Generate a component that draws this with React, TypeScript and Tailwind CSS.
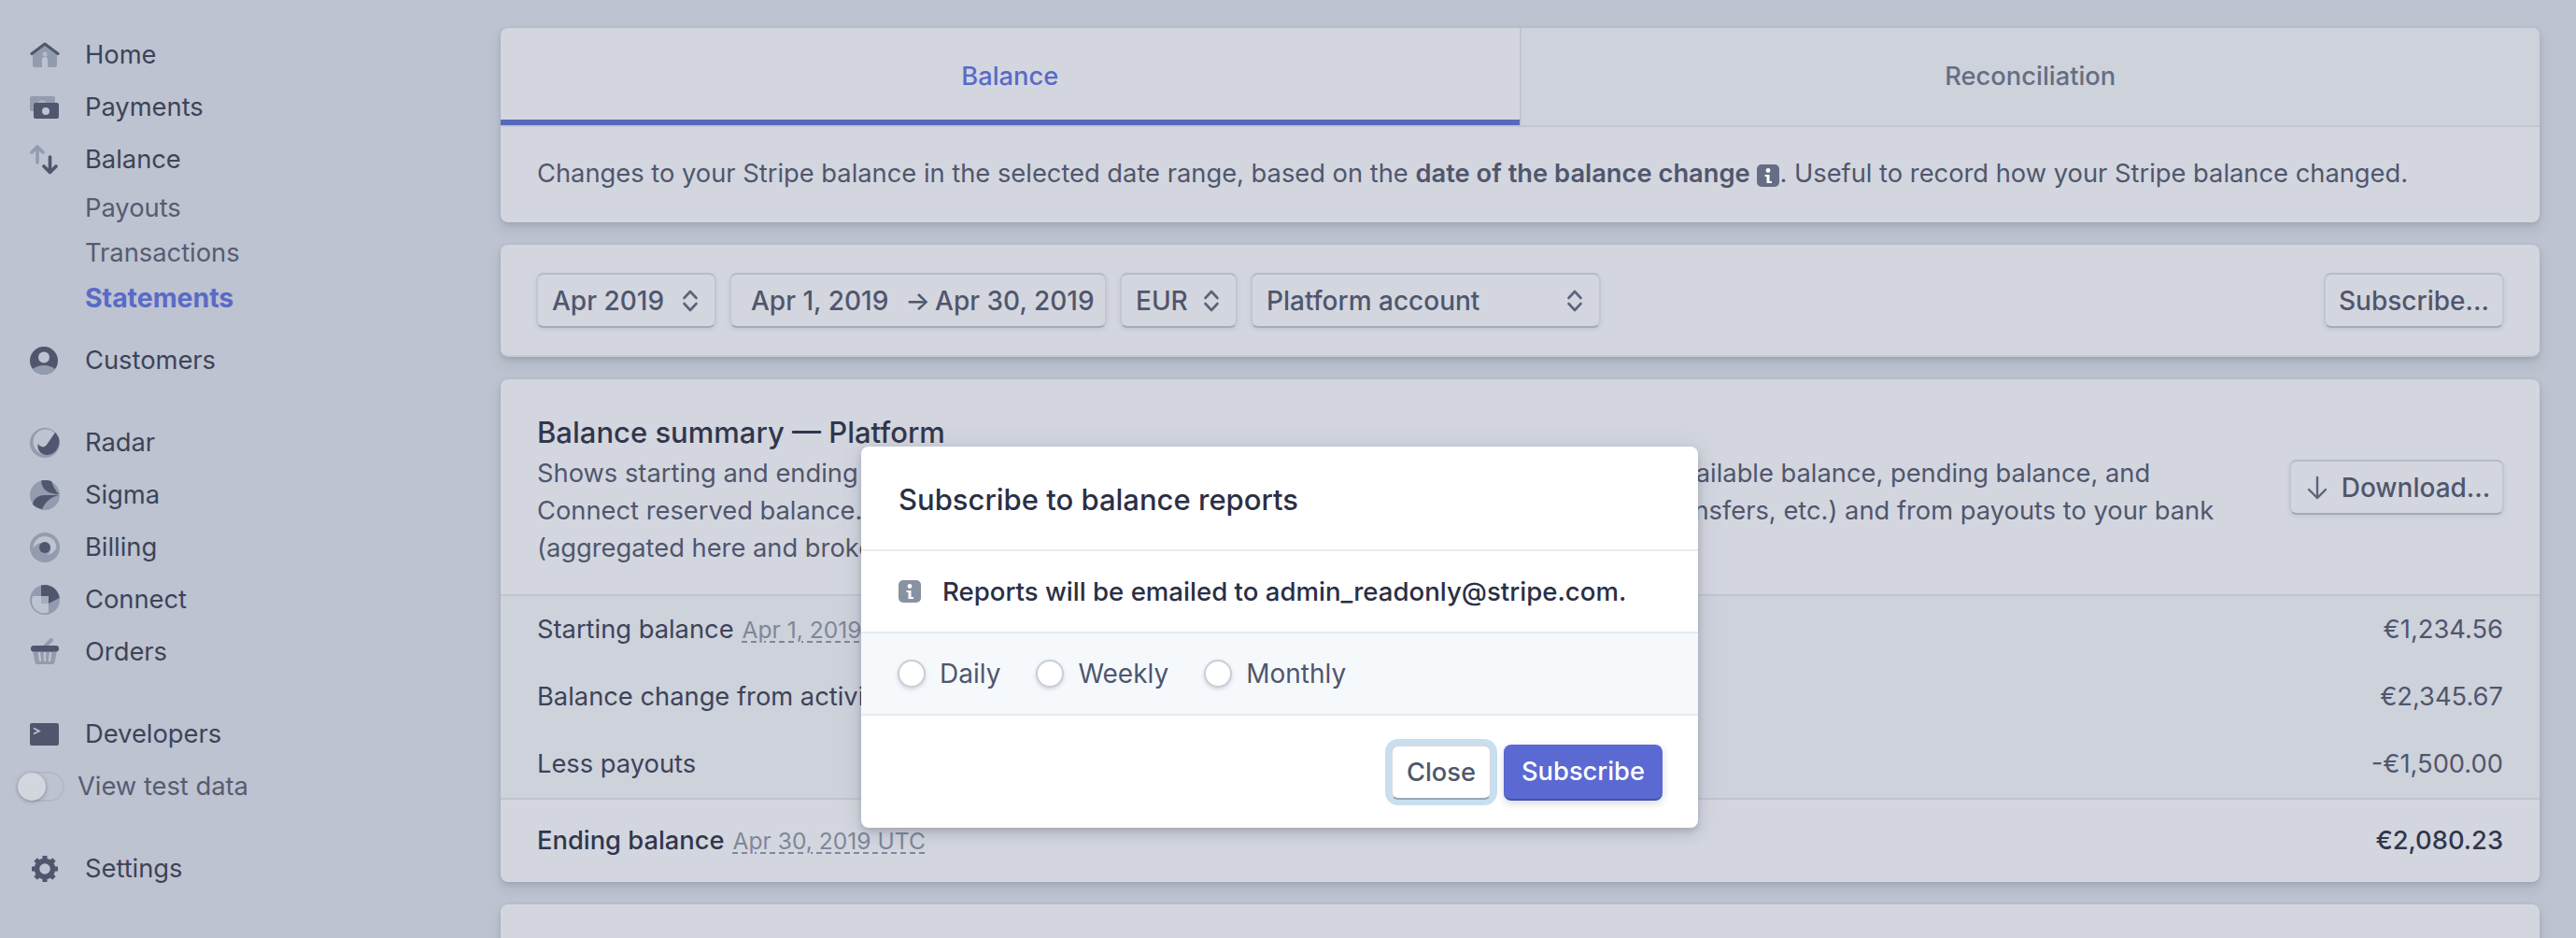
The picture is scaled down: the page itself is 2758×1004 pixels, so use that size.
import React from "react";

const D = "#50566d";
const L = "#929cae";
const B = "#bdc3d0";

const icons: Record<string, React.ReactNode> = {
  home: (
    <>
      <path d="M3 14 16 5l13 9v13a2 2 0 0 1-2 2h-8v-8a3 3 0 0 0-6 0v8H5a2 2 0 0 1-2-2z" fill={L} />
      <circle cx="16" cy="15" r="2.6" fill="#b4bbc8" />
      <path d="M2 14.5 16 4l14 10.5" fill="none" stroke={D} strokeWidth="3" strokeLinecap="round" strokeLinejoin="round" />
    </>
  ),
  payments: (
    <>
      <rect x="0" y="4" width="27" height="16" rx="2" fill={L} />
      <circle cx="13" cy="13" r="5" fill="#aab2c0" />
      <rect x="4" y="11" width="27" height="17" rx="2" fill={D} />
      <circle cx="17" cy="20" r="4" fill={B} />
    </>
  ),
  balance: (
    <>
      <path d="M8 19V2M2 8l6-6 6 6" fill="none" stroke={L} strokeWidth="3.6" strokeLinecap="round" strokeLinejoin="round" />
      <path d="M21.500 13v16M15 23l6.500 6.500L28 23" fill="none" stroke={D} strokeWidth="3.6" strokeLinecap="round" strokeLinejoin="round" />
    </>
  ),
  customers: (
    <>
      <circle cx="15" cy="16" r="15" fill={D} />
      <circle cx="15" cy="12.500" r="6" fill={B} />
      <path d="M3 25a14 8 0 0 1 24 0 15 15 0 0 1-24 0z" fill={L} />
    </>
  ),
  radar: (
    <>
      <circle cx="16" cy="16" r="16" fill={L} />
      <circle cx="17" cy="15" r="13.500" fill={B} />
      <path d="M27 5a14 14 0 0 1-8 24 11 11 0 0 1-9-4 9 9 0 0 1-1-8 5 5 0 0 0 9 1z" fill={D} />
    </>
  ),
  sigma: (
    <>
      <circle cx="16" cy="16" r="16" fill={L} />
      <path d="M12 .5c4-.800 8-.600 11 .5 2 6 5 11 8 14C22 15 13 12 12 .5z" fill={D} />
      <path d="M3 26c1-7 7-10 13-10h15c-9 2-14 7-18 15-4-1-8-3-10-5z" fill={D} />
    </>
  ),
  billing: (
    <>
      <circle cx="16" cy="16" r="16" fill={L} />
      <path d="M3.500 17a12.500 12.500 0 0 1 25-1c-2 5-6 7.500-11 8 7-2 6-13-3-13-6 0-9 3-11 6z" fill={B} />
      <circle cx="16" cy="16" r="6" fill={D} />
    </>
  ),
  connect: (
    <>
      <circle cx="16" cy="16" r="16" fill={L} />
      <path d="M3 12h9v8h8v9.500A13.500 13.500 0 0 1 3 12z" fill={B} />
      <path d="M12 .5A16 16 0 0 1 31.700 14L20 20v-8h-8z" fill={D} />
      <rect x="12" y="12" width="8" height="8" fill="#a4adbb" />
    </>
  ),
  orders: (
    <>
      <path d="M3 14h26l-2.500 13a2.500 2.500 0 0 1-2.500 2H8a2.500 2.500 0 0 1-2.500-2z" fill={L} />
      <path d="M10 17l1 8M16 17v8M22 17l-1 8" stroke={B} strokeWidth="2.400" strokeLinecap="round" />
      <path d="M15 11l8-8" stroke={L} strokeWidth="4" strokeLinecap="round" />
      <rect x="1" y="9" width="30" height="6.500" rx="3" fill={D} />
    </>
  ),
  developers: (
    <>
      <rect x="0" y="4" width="31" height="24" rx="2" fill={D} />
      <path d="M4 9.500l6 3-6 3" fill="none" stroke={B} strokeWidth="1.700" />
    </>
  ),
  settings: (
    <>
      <circle cx="16" cy="16" r="8.500" fill="none" stroke={D} strokeWidth="5.500" />
      {[0, 45, 90, 135, 180, 225, 270, 315].map((a) => (
        <rect key={a} x="13.500" y="2" width="5" height="6" fill={D} transform={`rotate(${a} 16 16)`} />
      ))}
    </>
  ),
};

function Icon({ name }: { name: string }) {
  return (
    <svg width="32" height="32" viewBox="0 0 32 32" className="shrink-0">
      {icons[name]}
    </svg>
  );
}

function NavItem({ icon, label }: { icon: string; label: string }) {
  return (
    <div className="flex h-14 items-center gap-[27px] pl-8 text-[#3d435a]">
      <Icon name={icon} />
      <span>{label}</span>
    </div>
  );
}

function SubItem({ label, active }: { label: string; active?: boolean }) {
  return (
    <div className={`flex h-12 items-center pl-[91px] ${active ? "text-[28.4px] font-bold text-[#5a6ac6]" : "text-[#565c72]"}`}>{label}</div>
  );
}

function Chevrons() {
  return (
    <svg width="18" height="24" viewBox="0 0 18 24" fill="none" stroke="#5d6379" strokeWidth="2.600" strokeLinecap="round" strokeLinejoin="round" className="shrink-0">
      <path d="M2.500 9 9 2l6.500 7M2.500 15 9 22l6.500-7" />
    </svg>
  );
}

const ctl =
  "flex h-[59px] items-center rounded-lg border-2 border-[#c2c6d1] border-t-[#b7bbc7] border-b-[#a4aab8] shadow-[0_2px_4px_rgba(60,66,87,0.1)] text-[28px] text-[#50566d] font-medium";

function Info({ dark }: { dark?: boolean }) {
  return (
    <span className={`inline-flex h-6 w-6 shrink-0 items-center justify-center rounded-[5px] ${dark ? "align-[-2px] bg-[#656e84]" : "bg-[#8792a2]"}`}>
      <svg width="10" height="18" viewBox="0 0 10 18" fill="#fff">
        <circle cx="5" cy="3.500" r="2.400" />
        <path d="M1.500 8h5v7H9v2H3.500V10h-2z" />
      </svg>
    </span>
  );
}

function DateLabel({ children }: { children: React.ReactNode }) {
  return (
    <span className="ml-[9px] text-[24.6px] font-normal text-[#7f8799] underline decoration-dashed decoration-2 underline-offset-[3px]">{children}</span>
  );
}

function Row({ label, date, amount }: { label: string; date?: string; amount: string }) {
  return (
    <div className="flex h-[72px] items-center justify-between px-[39px] text-[#3d435a]">
      <span>
        {label}
        {date && <DateLabel>{date}</DateLabel>}
      </span>
      <span className="text-[#50566d]">{amount}</span>
    </div>
  );
}

function Radio({ label, mr }: { label: string; mr: string }) {
  return (
    <div className={`flex items-center gap-[15px] ${mr}`}>
      <span className="h-[30px] w-[30px] rounded-full border-2 border-[#c9ced8] bg-white shadow-[0_2px_4px_rgba(60,66,87,0.2)]" />
      <span className="text-[28px] text-[#50566d]">{label}</span>
    </div>
  );
}

const card = "shrink-0 rounded-lg bg-[#d3d6df] shadow-[0_2px_5px_rgba(60,66,87,0.16),0_7px_14px_rgba(60,66,87,0.12)]";

export default function App() {
  return (
    <div className="relative flex h-[1004px] w-[2758px] overflow-hidden bg-[#bdc3d0] text-[27.3px] leading-10 [font-family:Inter,sans-serif]">
      <aside className="w-[536px] shrink-0 pt-[31px]">
        <NavItem icon="home" label="Home" />
        <NavItem icon="payments" label="Payments" />
        <NavItem icon="balance" label="Balance" />
        <SubItem label="Payouts" />
        <SubItem label="Transactions" />
        <SubItem label="Statements" active />
        <div className="mt-[15px]">
          <NavItem icon="customers" label="Customers" />
        </div>
        <div className="mt-8">
          <NavItem icon="radar" label="Radar" />
          <NavItem icon="sigma" label="Sigma" />
          <NavItem icon="billing" label="Billing" />
          <NavItem icon="connect" label="Connect" />
          <NavItem icon="orders" label="Orders" />
        </div>
        <div className="mt-8">
          <NavItem icon="developers" label="Developers" />
        </div>
        <div className="flex h-14 items-center gap-[14px] pl-[19px] text-[#565c72]">
          <span className="flex h-8 w-[50px] items-center rounded-full border-2 border-[#b2b9c6]">
            <span className="-ml-0.5 h-[30px] w-[30px] rounded-full bg-[#d3d6df] shadow-[0_1px_4px_rgba(60,66,87,0.45)]" />
          </span>
          <span>View test data</span>
        </div>
        <div className="mt-8">
          <NavItem icon="settings" label="Settings" />
        </div>
      </aside>

      <main className="flex w-[2183px] shrink-0 flex-col gap-6 pt-[30px]">
        <section className={card}>
          <div className="flex h-[106px] border-b-2 border-[#c0c5d1]">
            <div className="flex flex-1 items-center justify-center border-b-[6px] border-[#5868bd] pt-1.5 font-medium text-[#5a6ac6]">Balance</div>
            <div className="flex flex-1 items-center justify-center rounded-tr-lg border-l-2 border-[#c0c5d1] bg-[#ced2db] font-medium text-[#666d83]">Reconciliation</div>
          </div>
          <p className="px-[39px] pb-[32px] pt-[30px] text-[#50566d]">
            Changes to your Stripe balance in the selected date range, based on the <b className="font-semibold">date of the balance change</b> <Info dark />. Useful to record how your Stripe balance changed.
          </p>
        </section>

        <section className={`${card} flex h-[120px] items-start justify-between border-b-2 border-[#c6cad4] px-[38px] pt-[30px]`}>
          <div className="flex gap-[14px]">
            <div className={`${ctl} w-[193px] justify-between pl-[15px] pr-[17px]`}>
              <span>Apr 2019</span>
              <Chevrons />
            </div>
            <div className={`${ctl} w-[404px] pl-[21px]`}>
              <span>Apr 1, 2019</span>
              <span className="ml-[18px] mr-[5px]">→</span>
              <span>Apr 30, 2019</span>
            </div>
            <div className={`${ctl} w-[126px] justify-between pl-[15px] pr-[17px]`}>
              <span>EUR</span>
              <Chevrons />
            </div>
            <div className={`${ctl} w-[375px] justify-between pl-[15px] pr-[17px]`}>
              <span>Platform account</span>
              <Chevrons />
            </div>
          </div>
          <div className={`${ctl} w-[193px] justify-center`}>Subscribe...</div>
        </section>

        <section className={card}>
          <div className="relative h-[232px] border-b-2 border-[#c0c5d1] px-[39px] pt-[37px]">
            <h2 className="text-[31px] font-medium text-[#31364c]">Balance summary — Platform</h2>
            <p className="mt-1 text-[#50566d]">
              <span className="block">Shows starting and ending balance, for the selected date span, including the changes to your available balance, pending balance, and</span>
              <span className="block">Connect reserved balance. It also shows the overall changes from activity (charges, refunds, transfers, etc.) and from payouts to your bank</span>
              <span className="block">(aggregated here and broken down below).</span>
            </p>
            <div className={`${ctl} absolute right-[38px] top-[86px] w-[230px] justify-center gap-[14px] pl-[3px]`}>
              <svg width="24" height="28" viewBox="0 0 24 28" fill="none" stroke="#5d6379" strokeWidth="2.400" strokeLinecap="round" strokeLinejoin="round">
                <path d="M12 3v22M3 16l9 9 9-9" />
              </svg>
              Download...
            </div>
          </div>
          <div className="bg-[#ced2db]">
            <Row label="Starting balance" date="Apr 1, 2019 UTC" amount="€1,234.56" />
            <Row label="Balance change from activity" amount="€2,345.67" />
            <Row label="Less payouts" amount="-€1,500.00" />
          </div>
          <div className="border-t-2 border-[#c0c5d1]">
            <div className="flex h-[88px] items-center justify-between px-[39px] font-medium text-[#31364c]">
              <span>
                Ending balance
                <DateLabel>Apr 30, 2019 UTC</DateLabel>
              </span>
              <span>€2,080.23</span>
            </div>
          </div>
        </section>

        <section className={`${card} h-[200px]`} />
      </main>

      <div className="absolute left-[922px] top-[478px] w-[896px] overflow-visible rounded-lg bg-white shadow-[0_7px_14px_rgba(60,66,87,0.12),0_3px_6px_rgba(0,0,0,0.12),0_0_30px_rgba(60,66,87,0.1)]">
        <div className="flex h-[112px] items-center border-b-2 border-[#e6ebf1] px-10 pt-1 text-[31px] font-medium text-[#2a2f45]">Subscribe to balance reports</div>
        <div className="flex h-[88px] items-center gap-[23px] border-b-2 border-[#e6ebf1] px-10 text-[27.6px] font-medium text-[#2a2f45]">
          <Info />
          <span>Reports will be emailed to admin_readonly@stripe.com.</span>
        </div>
        <div className="flex h-[88px] items-center border-b-2 border-[#e6ebf1] bg-[#f6f9fc] px-[39px]">
          <Radio label="Daily" mr="mr-[38px]" />
          <Radio label="Weekly" mr="mr-[38px]" />
          <Radio label="Monthly" mr="" />
        </div>
        <div className="flex h-[120px] items-start justify-end gap-[13px] pr-[38px] pt-[31px]">
          <div className="flex h-[59px] w-[108px] items-center justify-center rounded-lg border-2 border-[#d5dae2] border-b-[#9aa5b5] bg-white font-medium text-[#50566d] shadow-[0_0_0_6px_#c8dff0]">Close</div>
          <div className="flex h-[60px] w-[170px] items-center justify-center rounded-lg border-b-2 border-[#4553a8] bg-[#5a6ad2] font-medium text-white shadow-[0_3px_8px_rgba(60,66,87,0.2)]">Subscribe</div>
        </div>
      </div>
    </div>
  );
}
